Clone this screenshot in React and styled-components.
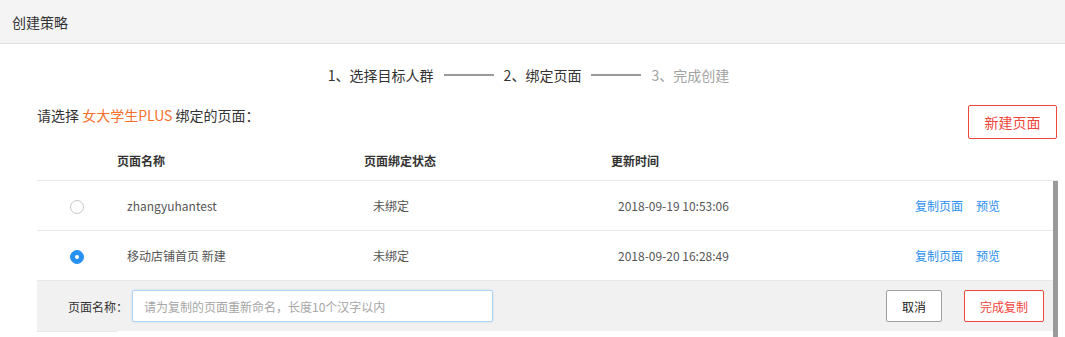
import React from "react";
import styled, { createGlobalStyle } from "styled-components";

const Global = createGlobalStyle`
  html, body { margin: 0; padding: 0; overflow: hidden; background: #fff; }
  body {
    font-family: "Noto Sans CJK SC", "Microsoft YaHei", "Noto Sans", sans-serif;
    color: #333;
  }
  * { box-sizing: border-box; }
`;

const Page = styled.div`
  width: 1065px;
  height: 337px;
  overflow: hidden;
`;

const TopBar = styled.header`
  height: 44px;
  background: #f4f4f4;
  border-bottom: 1px solid #e0e0e0;
  display: flex;
  align-items: center;
  padding-left: 12px;
  font-size: 14px;
  color: #333;
`;

const Steps = styled.div`
  margin-top: 21px;
  height: 20px;
  display: flex;
  align-items: center;
  justify-content: center;
  font-size: 14px;
  line-height: 20px;
  padding-right: 8px;
`;

const Step = styled.span`
  color: ${(p) => (p.$done ? "#333" : "#a3a3a3")};
`;

const StepLine = styled.span`
  width: 50px;
  height: 2px;
  background: #9a9a9a;
  margin: 0 10px;
`;

const Content = styled.div`
  padding: 0 7px 0 37px;
  margin-top: 20px;
`;

const IntroRow = styled.div`
  display: flex;
  justify-content: space-between;
  align-items: flex-start;
  height: 35px;
  padding-right: 1px;
`;

const Intro = styled.div`
  font-size: 14px;
  line-height: 20px;
  color: #333;
`;

const Highlight = styled.span`
  color: #f8702d;
`;

const OutlineButton = styled.button`
  height: ${(p) => p.$h || 32}px;
  width: ${(p) => p.$w}px;
  border: 1px solid ${(p) => (p.$danger ? "#f0453b" : "#a0a0a0")};
  color: ${(p) => (p.$danger ? "#f0453b" : "#222")};
  background: #fff;
  border-radius: 2px;
  font-family: inherit;
  font-size: ${(p) => p.$fs || 12}px;
  padding: 0;
  cursor: pointer;
`;

const COLS = "80px 247px 247px 304px 1fr";

const TableHead = styled.div`
  display: grid;
  grid-template-columns: ${COLS};
  align-items: center;
  height: 41px;
  border-bottom: 1px solid #e8e8e8;
  font-size: 12px;
  font-weight: bold;
  color: #333;
`;

const HeadCell = styled.div`
  padding-left: ${(p) => p.$inset || 0}px;
`;

const BodyWrap = styled.div`
  display: flex;
`;

const Body = styled.div`
  flex: 1;
`;

const ScrollTrack = styled.div`
  width: 5px;
  display: flex;
  flex-direction: column;
`;

const ScrollThumb = styled.div`
  height: 160px;
  background: #9a9a9a;
`;

const Row = styled.div`
  display: grid;
  grid-template-columns: ${COLS};
  align-items: center;
  height: 50px;
  border-bottom: 1px solid #e8e8e8;
  font-size: 12px;
  color: #555;
`;

const Cell = styled.div`
  padding-left: ${(p) => p.$inset || 0}px;
  white-space: nowrap;
`;

const RadioCell = styled.div`
  display: flex;
  justify-content: center;
  padding-left: 0;
  padding-top: 3px;
`;

const Radio = styled.span`
  width: 14px;
  height: 14px;
  border-radius: 50%;
  border: 1px solid ${(p) => (p.$checked ? "#2791f2" : "#c8c8c8")};
  background: ${(p) => (p.$checked ? "#2791f2" : "#fff")};
  display: flex;
  align-items: center;
  justify-content: center;
  &::after {
    content: "";
    width: 4px;
    height: 4px;
    border-radius: 50%;
    background: #fff;
    display: ${(p) => (p.$checked ? "block" : "none")};
  }
`;

const Actions = styled.div`
  display: flex;
  gap: 13px;
  padding-left: 0;
`;

const Link = styled.a`
  color: #2b8ff0;
  text-decoration: none;
  cursor: pointer;
`;

const EditPanel = styled.div`
  height: 50px;
  background: #f1f1f1;
  display: flex;
  align-items: center;
  padding: 0 9px 0 31px;
  font-size: 12px;
`;

const Label = styled.label`
  color: #333;
  margin-right: 4px;
`;

const NameInput = styled.input`
  width: 361px;
  height: 32px;
  border: 1px solid #aed3f3;
  box-shadow: 0 0 2px rgba(43, 143, 240, 0.25);
  border-radius: 2px;
  background: #fff;
  padding: 0 11px;
  font-family: inherit;
  font-size: 12px;
  outline: none;
  &::placeholder { color: #a6a6a6; }
`;

const Spacer = styled.div`
  flex: 1;
`;

const ButtonGroup = styled.div`
  display: flex;
  gap: 22px;
`;

const RowRemnant = styled.div`
  width: 80px;
  height: 1px;
  background: #e6e6e6;
`;

const rows = [
  { name: "zhangyuhantest", status: "未绑定", time: "2018-09-19 10:53:06", checked: false },
  { name: "移动店铺首页 新建", status: "未绑定", time: "2018-09-20 16:28:49", checked: true },
];

export default function App() {
  return (
    <Page>
      <Global />
      <TopBar>创建策略</TopBar>
      <Steps>
        <Step $done>1、选择目标人群</Step>
        <StepLine />
        <Step $done>2、绑定页面</Step>
        <StepLine />
        <Step>3、完成创建</Step>
      </Steps>
      <Content>
        <IntroRow>
          <Intro>
            请选择 <Highlight>女大学生PLUS</Highlight> 绑定的页面：
          </Intro>
          <OutlineButton $danger $w={89} $h={34} $fs={14}>新建页面</OutlineButton>
        </IntroRow>
        <TableHead>
          <HeadCell />
          <HeadCell>页面名称</HeadCell>
          <HeadCell>页面绑定状态</HeadCell>
          <HeadCell>更新时间</HeadCell>
          <HeadCell />
        </TableHead>
        <BodyWrap>
          <Body>
            {rows.map((r) => (
              <Row key={r.name}>
                <RadioCell>
                  <Radio $checked={r.checked} />
                </RadioCell>
                <Cell $inset={10}>{r.name}</Cell>
                <Cell $inset={9}>{r.status}</Cell>
                <Cell $inset={7}>{r.time}</Cell>
                <Actions>
                  <Link>复制页面</Link>
                  <Link>预览</Link>
                </Actions>
              </Row>
            ))}
            <EditPanel>
              <Label>页面名称：</Label>
              <NameInput placeholder="请为复制的页面重新命名，长度10个汉字以内" />
              <Spacer />
              <ButtonGroup>
                <OutlineButton $w={56}>取消</OutlineButton>
                <OutlineButton $danger $w={80}>完成复制</OutlineButton>
              </ButtonGroup>
            </EditPanel>
            <RowRemnant />
          </Body>
          <ScrollTrack>
            <ScrollThumb />
          </ScrollTrack>
        </BodyWrap>
      </Content>
    </Page>
  );
}
